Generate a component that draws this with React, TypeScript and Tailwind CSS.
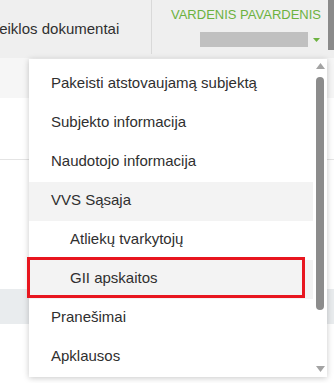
import { ReactNode } from 'react';

const MENU: { label: string; sub?: boolean; active?: boolean }[] = [
  { label: 'Pakeisti atstovaujamą subjektą' },
  { label: 'Subjekto informacija' },
  { label: 'Naudotojo informacija' },
  { label: 'VVS Sąsaja', active: true },
  { label: 'Atliekų tvarkytojų', sub: true },
  { label: 'GII apskaitos', sub: true, active: true },
  { label: 'Pranešimai' },
  { label: 'Apklausos' },
];

function Arrow({ up }: { up?: boolean }) {
  return (
    <svg width="9" height="6" viewBox="0 0 9 6" className="mx-auto">
      <path d={up ? 'M0 6 L4.5 0 L9 6 Z' : 'M0 0 L4.5 6 L9 0 Z'} fill="#a3a3a3" />
    </svg>
  );
}

function Row({ children, sub, active }: { children: ReactNode; sub?: boolean; active?: boolean }) {
  return (
    <div
      className={
        'flex h-[39px] items-center pb-[2px] ' +
        (sub ? 'pl-[41px] ' : 'pl-[22px] ') +
        (active ? 'bg-[#f3f3f3]' : 'bg-white')
      }
    >
      {children}
    </div>
  );
}

export default function App() {
  return (
    <div
      className="relative h-[383px] w-[334px] overflow-hidden bg-white text-[#2f2f2f]"
      style={{ fontFamily: '"Liberation Sans", Arial, sans-serif' }}
    >
      {/* header */}
      <div className="flex h-[58px] bg-[#efefef]">
        <div className="flex w-[151px] items-center overflow-hidden pt-[1px]">
          <span className="ml-[-10px] whitespace-nowrap text-[15px]">Veiklos dokumentai</span>
        </div>
        <div className="mb-[4px] w-px bg-[#d9d9d9]" />
        <div className="flex flex-1 flex-col items-end pr-[13px] pt-[7px]">
          <span className="whitespace-nowrap text-[13px] leading-[16px] text-[#6cb23f]">
            VARDENIS PAVARDENIS
          </span>
          <div className="mt-[9px] flex items-center gap-[5px] pr-[1px]">
            <div className="h-[15px] w-[108px] bg-[#c0c0c0]" />
            <svg width="7" height="4" viewBox="0 0 7 4">
              <path d="M0 0 L3.5 4 L7 0 Z" fill="#6cb23f" />
            </svg>
          </div>
        </div>
      </div>

      {/* page behind the menu */}
      <div className="h-[40px] bg-[#f6f6f6]" />
      <div className="h-[62px] border-b border-[#e4e4e4]" />
      <div className="h-[129px]" />
      <div className="h-[35px] bg-[#e9ecee]" />

      {/* page scrollbar */}
      <div className="absolute right-0 top-0 h-[50px] w-[6px] bg-[#8a8a8a]" />

      {/* dropdown */}
      <div className="absolute left-[29px] top-[59px] flex h-[318px] w-[298px] bg-white shadow-[0_1px_6px_rgba(0,0,0,0.22)]">
        <div className="flex-1 pt-[6px] text-[15px]">
          {MENU.map(item => (
            <Row key={item.label} sub={item.sub} active={item.active}>
              {item.label}
            </Row>
          ))}
        </div>
        <div className="flex w-[14px] flex-col pt-[4px]">
          <Arrow up />
          <div className="mx-auto mt-[8px] h-[233px] w-[8px] rounded-full bg-[#8c8c8c]" />
          <div className="mt-[56px]">
            <Arrow />
          </div>
        </div>
      </div>

      {/* highlight frame */}
      <div className="absolute left-[27px] top-[257px] h-[41px] w-[278px] border-[3px] border-[#e8161f]" />
    </div>
  );
}
